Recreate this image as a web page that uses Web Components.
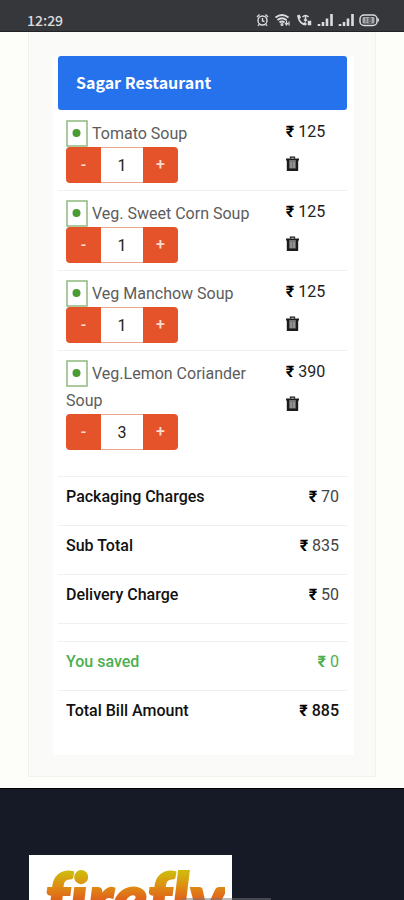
<!DOCTYPE html>
<html lang="en">
<head>
<meta charset="utf-8">
<meta name="viewport" content="width=device-width, initial-scale=1">
<title>Sagar Restaurant</title>
<style>
  :root { --blue: #2672ed; --orange: #e4532a; --veg: #4a9c32; --saved: #4caf50; --line: #f0f0f0; }
  html { scrollbar-width: none; }
  body { margin: 0; background: #fdfdf9; color: #111; font: 16px/24px Roboto, "Liberation Sans", sans-serif; }
</style>
</head>
<body>
<status-bar></status-bar>
<main>
  <order-panel heading="Sagar Restaurant">
    <cart-item price="125" quantity="1">Tomato Soup</cart-item>
    <cart-item price="125" quantity="1">Veg. Sweet Corn Soup</cart-item>
    <cart-item price="125" quantity="1">Veg Manchow Soup</cart-item>
    <cart-item price="390" quantity="3">Veg.Lemon Coriander Soup</cart-item>
    <bill-row slot="bill" amount="70">Packaging Charges</bill-row>
    <bill-row slot="bill" amount="835">Sub Total</bill-row>
    <bill-row slot="bill" amount="50">Delivery Charge</bill-row>
    <bill-row slot="bill" spacer></bill-row>
    <bill-row slot="bill" amount="0" saved>You saved</bill-row>
    <bill-row slot="bill" amount="885" total>Total Bill Amount</bill-row>
  </order-panel>
</main>
<site-footer></site-footer>

<script>
class StatusBar extends HTMLElement {
  constructor() {
    super();
    this.attachShadow({ mode: 'open' }).innerHTML = `
      <style>
        :host { display: flex; justify-content: space-between; align-items: center; box-sizing: border-box; height: 32px;
          padding: 9px 25px 0 27px; background: #36373b; color: #dcdcde; border-bottom: 1px solid #222226; }
        time { font: 500 14px/20px "Noto Sans CJK SC", "Noto Sans", sans-serif; }
        .icons { display: flex; align-items: center; gap: 5px; }
        svg { display: block; height: 14px; fill: none; stroke: currentColor; }
      </style>
      <time>12:29</time>
      <div class="icons">
        <svg width="13" viewBox="0 0 13 14" stroke-width="1.4"><circle cx="6.5" cy="7.5" r="4.5"/><path d="M6.5 5v3l2 .5M1 4l2.5-2.5M12 4L9.500 1.500M3 11.500l-1 1.200M10 11.500l1 1.200"/></svg>
        <svg width="17" viewBox="0 0 16 14" stroke-width="1.900"><path d="M1 4.500q6.500-5 13 0M3 7q4.500-3.500 9 0M5 9.500q2.500-2 5 0"/><circle cx="7.500" cy="11.500" r=".6"/><path d="M12 7.500v4M10.500 10l1.500 2 1.500-2M14.500 12.500V8.500" stroke-width="1.200"/></svg>
        <svg width="16" viewBox="0 0 16 14" stroke-width="1.500"><path d="M1 2.500l2.500-1 1.500 3-1.500 1.500q1.500 3 4 4l1.500-1 2 2-1.500 1.500Q2.500 11.500 1 2.500z" fill="currentColor" stroke="none"/><path d="M6.500 4q3-3 6 0M9.500 3v5M8 6.500l1.500 1.500 1.500-1.500"/><rect x="12.500" y="8.500" width="2" height="3" fill="currentColor"/></svg>
        <svg width="16" viewBox="0 0 16 14" stroke-width="2.600"><path d="M2 13v-2M6 13V9M10 13V5.500M14.500 13V1"/></svg>
        <svg width="16" viewBox="0 0 16 14" stroke-width="2.600"><path d="M2 13v-2M6 13V9M10 13V5.500M14.500 13V1"/></svg>
        <svg width="20" viewBox="0 0 20 14" stroke-width="1.500"><rect x="1" y="2" width="17" height="10.500" rx="4"/><rect x="3.500" y="4" width="12" height="6.500" rx="1" fill="#a8a8ac" stroke="none"/><path d="M7 5v4.500M10 5h2v4.500h-2zM10 7h2" stroke="#4a4b4f" stroke-width="1"/><path d="M19.200 5.500v3"/></svg>
      </div>`;
  }
}

// Rupee sign is always heavier than the digits beside it
const rupee = '<b class="rs">₹</b>';

class OrderPanel extends HTMLElement {
  constructor() {
    super();
    this.attachShadow({ mode: 'open' }).innerHTML = `
      <style>
        :host { display: block; margin: 0 28px 11px; padding: 0 21px 21px 24px; background: #fafaf8; border: solid #f1f1ef; border-width: 0 1px 1px; }
        .card { padding: 24px 7px 16px 5px; background: linear-gradient(#fafaf8 24px, #fff 24px); }
        h1 { margin: 0 0 1px; padding: 14px 18px 16px; border-radius: 3px; background: var(--blue); color: #fff;
          font: 700 16px/24px "Noto Sans CJK SC", "Noto Sans", sans-serif; }
        .items { padding-bottom: 19px; }
      </style>
      <section class="card">
        <h1></h1>
        <div class="items"><slot></slot></div>
        <slot name="bill"></slot>
      </section>`;
  }
  connectedCallback() { this.shadowRoot.querySelector('h1').textContent = this.getAttribute('heading'); }
}

class QuantityPicker extends HTMLElement {
  constructor() {
    super();
    this.attachShadow({ mode: 'open' }).innerHTML = `
      <style>
        :host { display: grid; grid-template-columns: 35px 42px 35px; width: max-content; height: 36px; border-radius: 4px; overflow: hidden; }
        button { border: 0; padding: 0; background: var(--orange); color: #fbdcd0; font: inherit; font-weight: 500; cursor: pointer; }
        input { box-sizing: border-box; width: 100%; height: 36px; margin: 0; padding: 0; border: solid #eba893; border-width: 1px 0; border-radius: 0;
          background: #fff; color: #222; font: inherit; text-align: center; }
      </style>
      <button type="button" class="less" aria-label="Decrease">-</button>
      <input type="text" inputmode="numeric" aria-label="Quantity">
      <button type="button" class="more" aria-label="Increase">+</button>`;
    this._input = this.shadowRoot.querySelector('input');
    this.shadowRoot.querySelector('.less').addEventListener('click', () => this._step(-1));
    this.shadowRoot.querySelector('.more').addEventListener('click', () => this._step(1));
  }
  connectedCallback() { this._input.value = this.getAttribute('value') || '1'; }
  _step(by) { this._input.value = Math.max(1, Number(this._input.value) + by); }
}

class CartItem extends HTMLElement {
  constructor() {
    super();
    this.attachShadow({ mode: 'open' });
  }
  connectedCallback() {
    this.shadowRoot.innerHTML = `
      <style>
        :host { display: grid; grid-template-columns: 3fr 1fr; border-bottom: 1px solid var(--line); }
        :host(:last-of-type) { border-bottom: 0; }
        .dish { padding: 9px 0 7px 8px; }
        .name { color: #5c5c5c; line-height: 27px; }
        .veg { display: inline-block; vertical-align: top; margin-right: 4px; width: 22px; height: 27px; }
        .side { display: flex; flex-direction: column; align-items: flex-start; gap: 12px; padding: 9px 0 0 11px; color: #222; }
        .rs { color: #000; }
        button { border: 0; padding: 0; background: none; cursor: pointer; }
        svg { display: block; }
      </style>
      <div class="dish">
        <div class="name"><svg class="veg" viewBox="0 0 22 27" role="img" aria-label="Vegetarian"><rect x="1" y="1" width="20" height="25" fill="#fff" stroke="#8fb87c" stroke-width="1.500"/><circle cx="10.500" cy="13" r="4" fill="#4a9c32"/></svg><slot></slot></div>
        <quantity-picker value="${this.getAttribute('quantity')}"></quantity-picker>
      </div>
      <div class="side">
        <span>${rupee} ${this.getAttribute('price')}</span>
        <button type="button" aria-label="Remove">
          <svg width="13" height="16" viewBox="0 0 13 16" fill="none" stroke="#1b1b1b"><path d="M4.500 2.500V1.200h4v1.300" stroke-width="1.300"/><path d="M0 3.500h13" stroke-width="2"/><path d="M2 4v9.800h9V4" fill="#777" stroke-width="2.400"/><path d="M5 6v6M8 6v6" stroke="#aaa"/></svg>
        </button>
      </div>`;
  }
}

class BillRow extends HTMLElement {
  constructor() {
    super();
    this.attachShadow({ mode: 'open' });
  }
  connectedCallback() {
    const spacer = this.hasAttribute('spacer');
    this.shadowRoot.innerHTML = `
      <style>
        :host { display: flex; justify-content: space-between; padding: 8px 8px 16px; border-top: 1px solid var(--line); }
        :host([spacer]) { padding: 0 0 17px; }
        .label { font-weight: 500; }
        .amount { color: #444; }
        .rs { color: #000; }
        :host([saved]) .label, :host([saved]) .amount, :host([saved]) .rs { color: var(--saved); }
        :host([total]) .amount { color: #111; font-weight: 500; }
      </style>
      ${spacer ? '' : `<span class="label"><slot></slot></span><span class="amount">${rupee} ${this.getAttribute('amount')}</span>`}`;
  }
}

class SiteFooter extends HTMLElement {
  constructor() {
    super();
    this.attachShadow({ mode: 'open' }).innerHTML = `
      <style>
        :host { display: block; padding: 66px 29px 24px; background: #151a26; border-top: 1px solid #000; }
        a { display: block; width: max-content; padding: 0 7px 0 16px; background: #fff; text-decoration: none; }
        span { display: block; font: italic 900 72px/84px Lato, "Open Sans", sans-serif; font-variant-ligatures: none; color: transparent;
          -webkit-text-stroke: 2px transparent;
          background: linear-gradient(#d0b80c 18px, #df8a14 32px, #e0521d 50px); background-clip: text; -webkit-background-clip: text; }
        .handle { position: fixed; left: 45%; bottom: 0; width: 22%; height: 2px; background: #77777a80; }
      </style>
      <a href="#"><span>firefly</span></a>
      <div class="handle"></div>`;
  }
}

customElements.define('status-bar', StatusBar);
customElements.define('quantity-picker', QuantityPicker);
customElements.define('cart-item', CartItem);
customElements.define('bill-row', BillRow);
customElements.define('order-panel', OrderPanel);
customElements.define('site-footer', SiteFooter);
</script>
</body>
</html>
